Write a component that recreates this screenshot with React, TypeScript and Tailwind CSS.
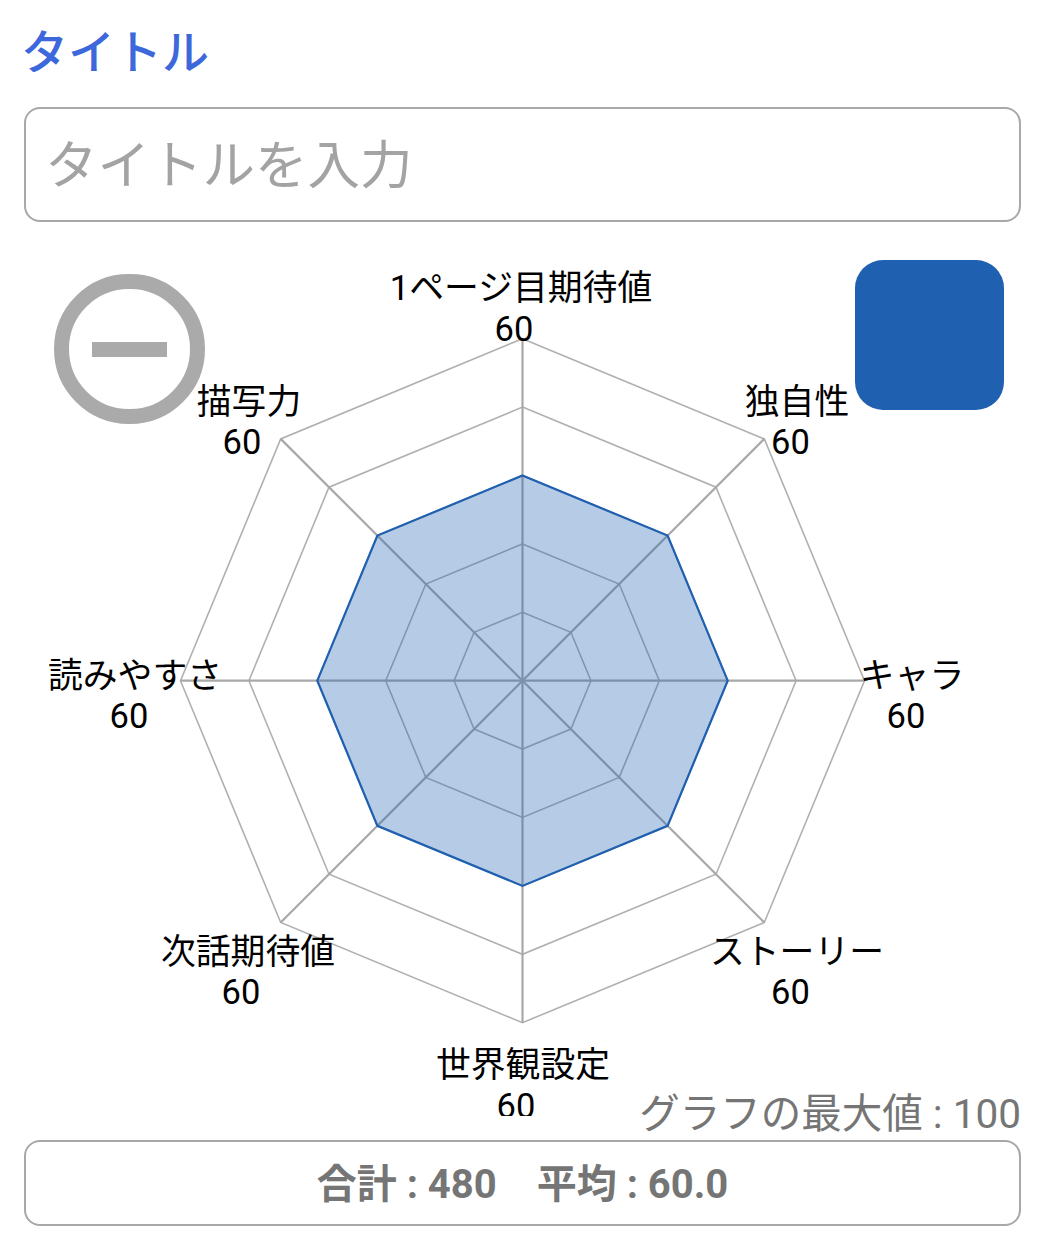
import React from 'react';

const CX = 522.5;
const CY = 430.7;
const R = 342;

const labels = [
  { name: '1ページ目期待値', x: 521, y: 300, vx: 514, vy: 341 },
  { name: '独自性', x: 797, y: 414, vx: 790.5, vy: 454 },
  { name: 'キャラ', x: 912, y: 688, vx: 906, vy: 728 },
  { name: 'ストーリー', x: 797, y: 964, vx: 790.5, vy: 1004 },
  { name: '世界観設定', x: 523, y: 1077, vx: 516, vy: 1118 },
  { name: '次話期待値', x: 248, y: 964, vx: 241, vy: 1004 },
  { name: '読みやすさ', x: 135, y: 688, vx: 129, vy: 728 },
  { name: '描写力', x: 249, y: 414, vx: 242, vy: 454 },
];

const point = (i: number, r: number) => {
  const a = (Math.PI / 4) * i - Math.PI / 2;
  return [CX + r * Math.cos(a), CY + r * Math.sin(a)];
};

const ring = (r: number) =>
  labels.map((_, i) => point(i, r).map((n) => n.toFixed(1)).join(',')).join(' ');

const RadarChart: React.FC = () => (
  <svg width="1045" height="866" viewBox="0 0 1045 866" className="block">
    {[1, 2, 3, 4, 5].map((n) => (
      <polygon key={n} points={ring((R / 5) * n)} fill="none" stroke="#b0b0b0" strokeWidth="1.6" />
    ))}
    {labels.map((_, i) => {
      const [x, y] = point(i, R);
      return <line key={i} x1={CX} y1={CY} x2={x} y2={y} stroke="#a8a8a8" strokeWidth="2.2" />;
    })}
    <polygon points={ring(R * 0.6)} fill="#2060b0" fillOpacity="0.33" stroke="#2060b0" strokeWidth="2.2" />
    {labels.map((l) => (
      <g key={l.name} fontSize="34.8" fill="#000" textAnchor="middle">
        <text x={l.x} y={l.y - 250}>{l.name}</text>
        <text x={l.vx} y={l.vy - 250} fontSize="34.5">60</text>
      </g>
    ))}
  </svg>
);

const App: React.FC = () => {
  return (
    <div className="w-[1045px] h-[1240px] bg-white overflow-hidden font-['Roboto','Noto_Sans_CJK_JP',sans-serif]">
      <div className="px-6 pt-[19px]">
        <div className="h-[68px] -ml-[3px] text-[47px] leading-[68px] font-medium text-[#3d68dc]">タイトル</div>
        <div className="mt-[20px] h-[115px] flex items-center pl-[19px] pt-1 rounded-[16px] border-2 border-[#a8a8a8] text-[52.5px] text-[#a3a3a3]">
          タイトルを入力
        </div>
      </div>

      <div className="relative mt-[28px] h-[866px] overflow-hidden">
        <RadarChart />
        <div className="absolute left-[54px] top-[24px] w-[151px] h-[150px] rounded-full border-[15px] border-[#aaaaaa] flex items-center justify-center">
          <div className="w-[75px] h-[15px] bg-[#aaaaaa]" />
        </div>
        <div className="absolute left-[855px] top-[10px] w-[149px] h-[150px] rounded-[28px] bg-[#2060b0]" />
      </div>

      <div className="relative px-6">
        <div className="absolute right-6 top-[-50px] text-[40.5px] leading-[48px] text-[#757575] whitespace-nowrap">
          グラフの最大値 : 100
        </div>
        <div className="mt-[24px] h-[86px] flex items-center justify-center pt-1 rounded-[16px] border-2 border-[#a8a8a8] text-[40px] font-bold text-[#757575]">
          合計 : 480　平均 : 60.0
        </div>
      </div>
    </div>
  );
};

export default App;
